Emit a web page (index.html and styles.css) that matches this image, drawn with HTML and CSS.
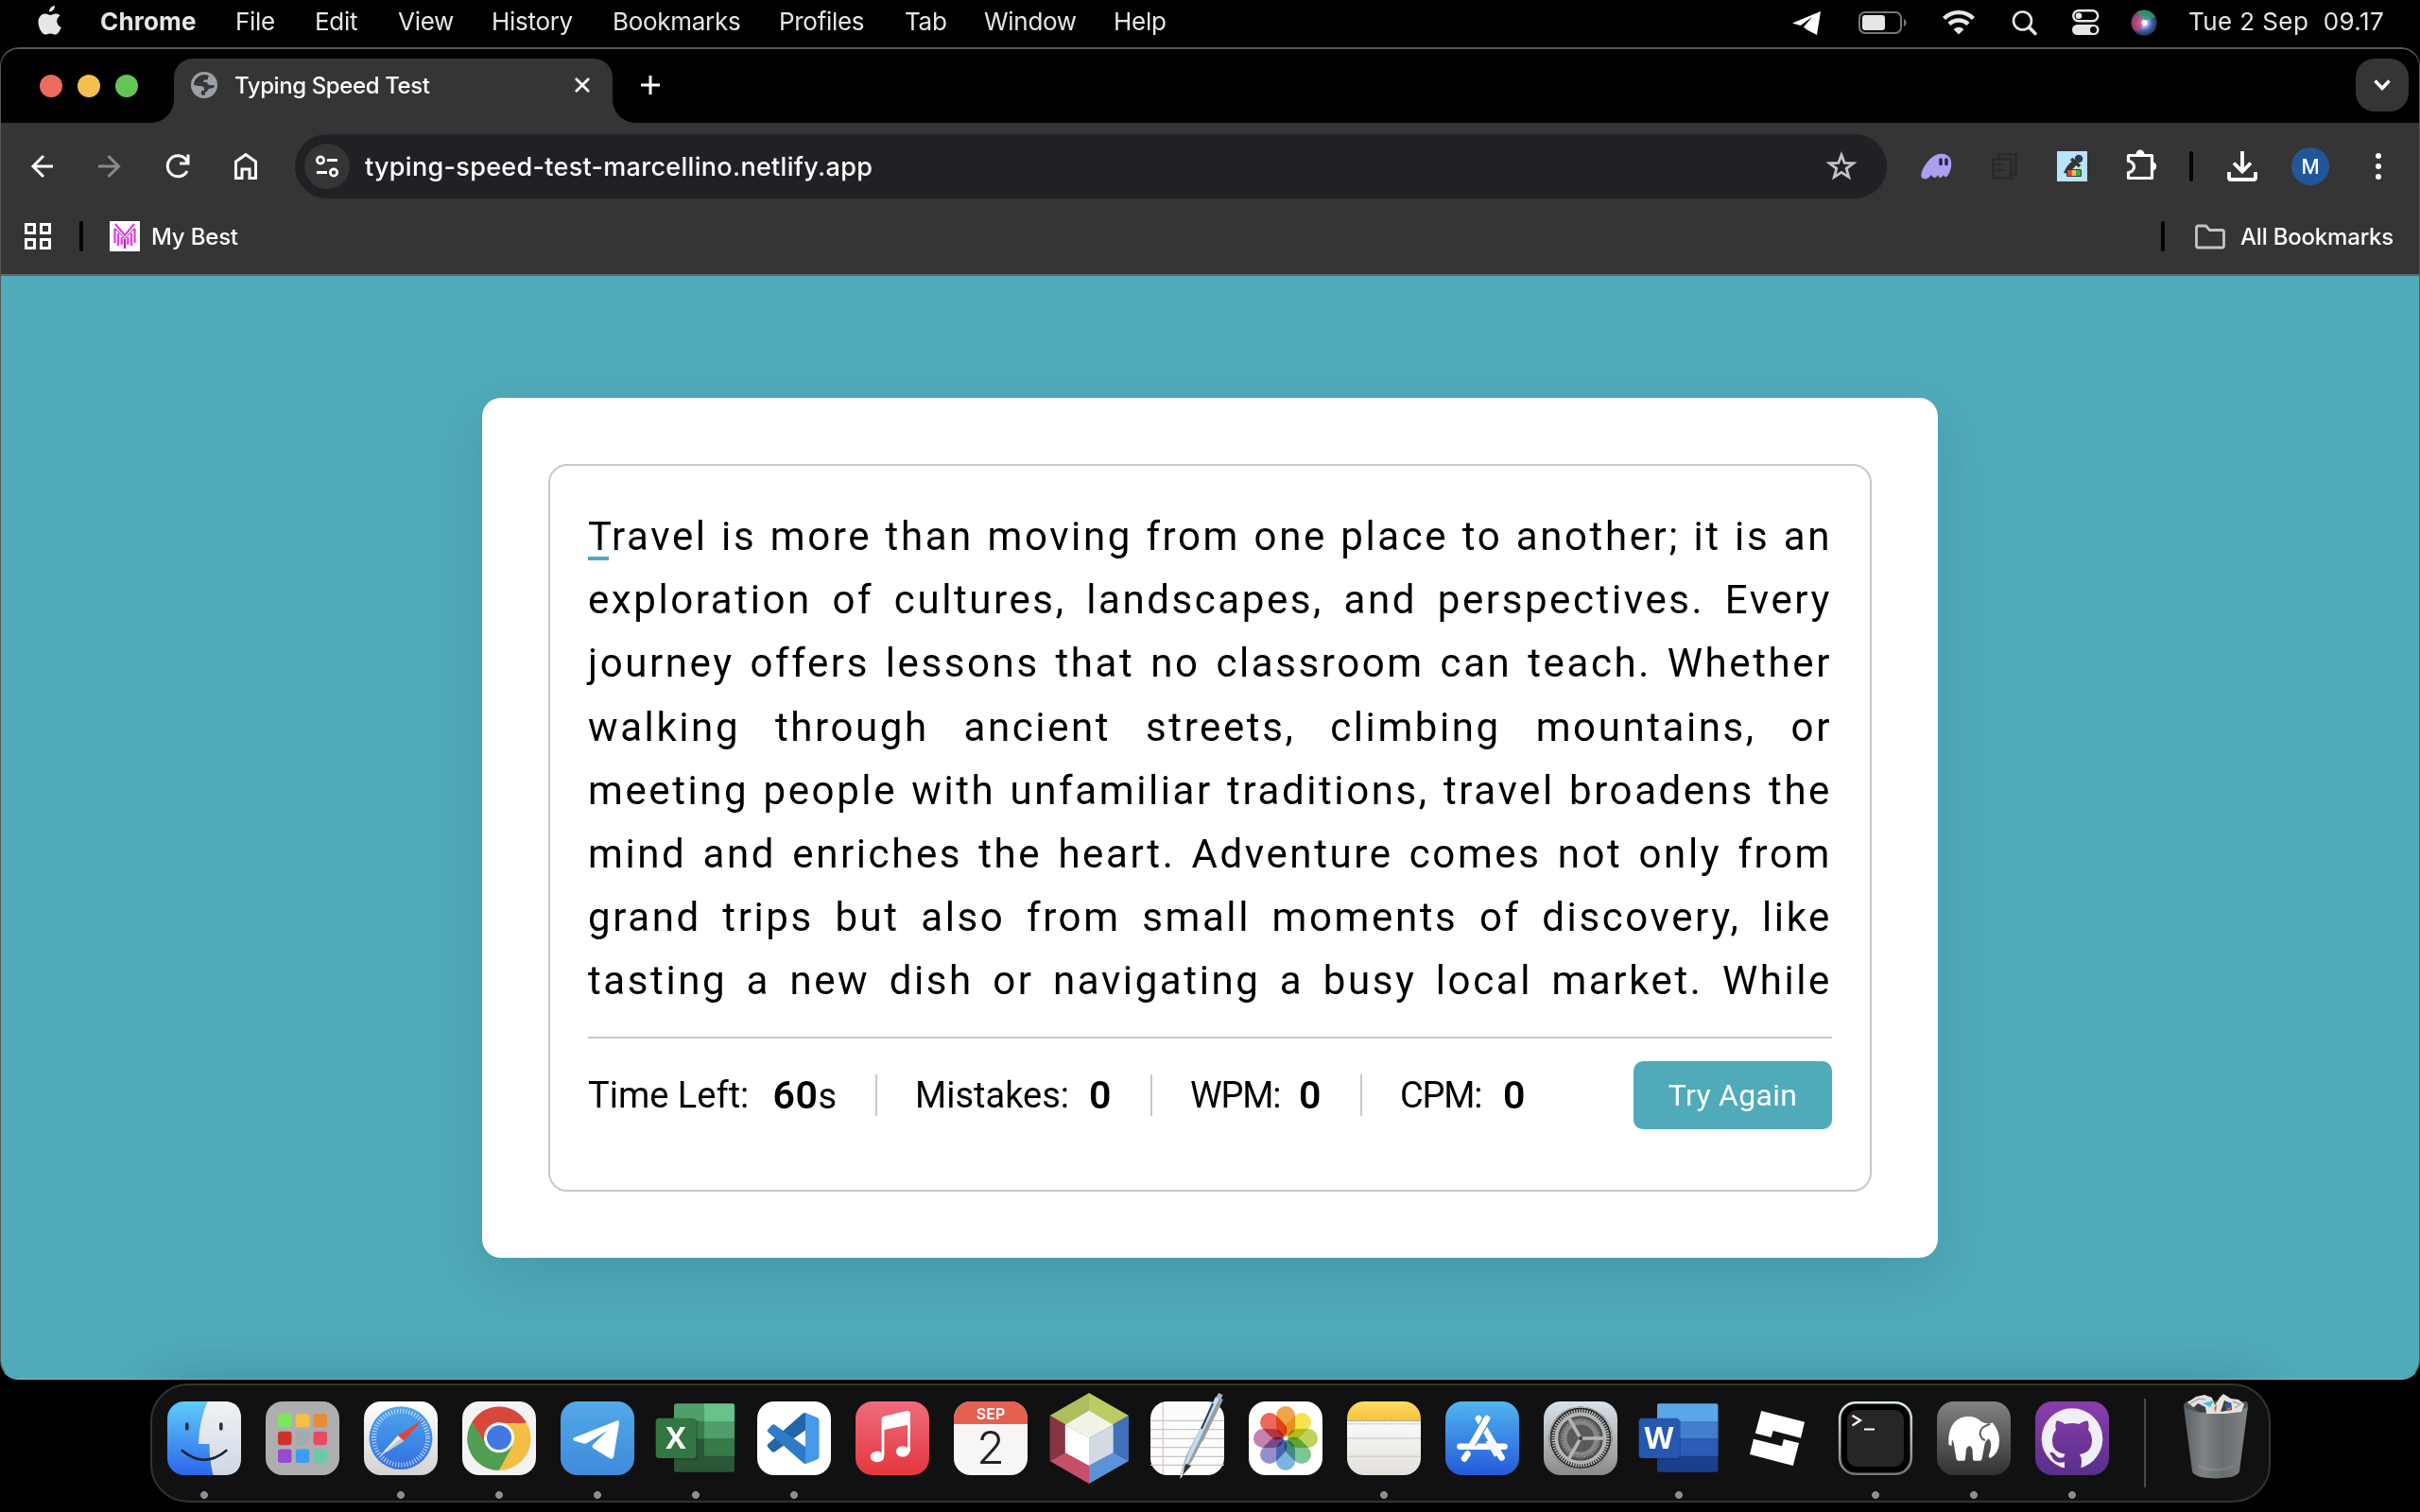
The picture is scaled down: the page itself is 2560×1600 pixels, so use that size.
FILE: index.html
```html
<!DOCTYPE html>
<html lang="en">
<head>
<meta charset="utf-8">
<title>Typing Speed Test</title>
<link rel="stylesheet" href="styles.css">
</head>
<body>
<header class="menubar">
  <svg class="apple" width="28" height="34" viewBox="0 0 28 34"><path d="M19 1c.3 3-2.600 6.600-6 6.600C12.600 4.500 15.800 1.200 19 1zM24.600 11.600c-2.400 1.500-3.500 3.500-3.400 6 .1 3 1.900 5.300 4.500 6.300-1 3-3.600 7.600-6.500 7.700-1.900 0-2.700-1.200-5-1.200s-3.200 1.200-5 1.200C5.500 31.600 1.500 24.600 1.500 18.500c0-5.600 3.600-9 7.500-9 2.200 0 3.900 1.400 5.300 1.400 1.300 0 3.300-1.500 5.900-1.500 1.700 0 3.400.8 4.400 2.200z" fill="#e6e6e6"/></svg>
  <nav class="menus">
    <b class="m-chrome">Chrome</b><span class="m-file">File</span><span class="m-edit">Edit</span><span class="m-view">View</span><span class="m-history">History</span><span class="m-bookmarks">Bookmarks</span><span class="m-profiles">Profiles</span><span class="m-tab">Tab</span><span class="m-window">Window</span><span class="m-help">Help</span>
  </nav>
  <div class="status">
    <svg width="662" height="50" viewBox="1886 0 662 50">
      <path d="M1896 24.500 1926 12l-4 25-10.500-5.500-3.500-3 9-10.500-12.500 9z" fill="#fff"/>
      <rect x="1967" y="13" width="44" height="22" rx="6" fill="none" stroke="#777" stroke-width="2"/><rect x="1970" y="16" width="24" height="16" rx="3" fill="#e6e6e6"/><path d="M2014 20c3.500 1.500 3.500 6.500 0 8z" fill="#777"/>
      <g fill="none" stroke="#e6e6e6" stroke-width="4.400"><path d="M2056.500 19.500a22 22 0 0 1 31 0"/><path d="M2062 25.500a14.500 14.500 0 0 1 20 0"/></g><path d="M2066.500 31q5.500-4.500 11 0L2072 36.500z" fill="#e6e6e6"/>
      <g fill="none" stroke="#e6e6e6"><circle cx="2139.500" cy="22" r="9.500" stroke-width="2.600"/><path d="m2146.500 29 6.500 6.500" stroke-width="3.600" stroke-linecap="round"/></g>
      <rect x="2193.200" y="11.200" width="26" height="11" rx="5.500" fill="none" stroke="#e6e6e6" stroke-width="2.400"/><circle cx="2199" cy="16.700" r="3.300" fill="#e6e6e6"/><rect x="2192" y="26" width="28.500" height="11" rx="5.500" fill="#e6e6e6"/><circle cx="2214.500" cy="31.500" r="3.500" fill="#000"/>
      <defs><radialGradient id="siri"><stop offset="0" stop-color="#fff"/><stop offset=".28" stop-color="#c9b4e4"/><stop offset=".62" stop-color="#3c66ad"/><stop offset="1" stop-color="#25314e"/></radialGradient></defs>
      <circle cx="2268" cy="24" r="13.800" fill="url(#siri)"/><path d="M2255 24a13 13 0 0 1 9-12q3 8 4 12l-6 10q-7-3-7-10z" fill="#d63f6e" opacity=".7"/><path d="M2260 13a14 14 0 0 1 20 5l-11 4z" fill="#2f9b6c" opacity=".8"/><circle cx="2268.500" cy="24" r="3" fill="#fff"/>
    </svg>
    <span class="clock">Tue 2 Sep&nbsp; 09.17</span>
  </div>
</header>

<main class="window">
  <div class="tabstrip">
    <div class="lights"><i class="red"></i><i class="yellow"></i><i class="green"></i></div>
    <div class="tab">
      <svg width="28" height="28" viewBox="0 0 28 28"><circle cx="14" cy="14" r="14" fill="#9aa0a6"/><path d="M13 3C7 4 3 9 3 14l5 1c3 0 6 0 6 3v2h-3v4c-1 0-2 0-2-1 1 1 4 2 6 1.500v-3c4-1 2-4 6-4 3 0 4-1 4-3.500-5 .5-7 0-7.500-2-.5-1.500-2-1-4-1V8.500h3.500c1 0 1-3 2-4.500C17 3 15 3 13 3z" fill="#353535"/></svg>
      <span class="tab-title">Typing Speed Test</span>
      <svg class="tab-close" width="18" height="18" viewBox="0 0 18 18"><path d="m2 2 14 14M16 2 2 16" stroke="#fff" stroke-width="2.800"/></svg>
    </div>
    <svg class="plus" width="20" height="20" viewBox="0 0 20 20"><path d="M10 0v20M0 10h20" stroke="#fff" stroke-width="3"/></svg>
    <button class="tab-search"><svg width="18" height="12" viewBox="0 0 18 12"><path d="m1.500 1.500 7.500 8 7.500-8" fill="none" stroke="#fff" stroke-width="3.400"/></svg></button>
  </div>
  <div class="toolbar">
    <svg width="312" height="80" viewBox="2 130 312 80"><g fill="none" stroke="#fff" stroke-width="3">
      <path d="M56 176H35M46 165l-11 11 11 11"/><path d="M104 176h21M114.500 165l11 11-11 11" stroke="#8a8a8a"/>
      <path d="M198 181a11 11 0 1 1-1.500-12.500l2 3.500M199 163.500v9.500h-9"/>
      <path d="M249.500 188.500v-17.500l10.500-7.500 10.500 7.500v17.500h-6.500v-9.500h-8v9.500z"/></g></svg>
    <div class="omnibox">
      <span class="site"><svg width="26" height="26" viewBox="0 0 26 26"><g fill="none" stroke="#fff" stroke-width="2.800"><circle cx="6" cy="6.500" r="3.600"/><path d="M13 6.500h11M2 19.500h11"/><circle cx="20" cy="19.500" r="3.600"/></g></svg></span>
      <span class="url">typing-speed-test-marcellino.netlify.app</span>
      <svg class="star" width="32" height="32" viewBox="0 0 32 32"><path d="m16 4 3.200 8.400 9.300.4-7.300 5.600 2.500 8.900L16 22.300l-7.700 5 2.500-8.900-7.300-5.600 9.300-.4z" fill="none" stroke="#c4c4c4" stroke-width="2.800"/></svg>
    </div>
    <svg width="560" height="80" viewBox="1996 130 560 80">
      <path d="M2033 188c-3-4 4-15 9-20 6-6 15-7 20-2 4 5 2 14-1 19-2 3-4 3-5 0-2 4-5 4-6 0-2 4-5 4-7 0-3 4-6 6-10 3z" fill="#ab9ff2"/><path d="M2053 169v4.500M2059 169v4.500" stroke="#29264a" stroke-width="3.600" stroke-linecap="round"/>
      <g fill="none" stroke="#292929" stroke-width="2.600"><path d="M2114 168v-4.500h18.500v21H2129"/><path d="M2108.500 168.500h19v20h-19zM2112 174h7M2112 180h9"/></g>
      <path d="M2176 160h32v32h-32z" fill="#b9e3fb"/><path d="M2183 183q3-8 10-13l4 4q-5 6-9 8-2 2-5 1z" fill="#333"/><path d="m2191 168 9 8" stroke="#333" stroke-width="3.500"/><circle cx="2199" cy="168" r="4.300" fill="#333b48"/><rect x="2186" y="179" width="16" height="8" rx="1.500" fill="#333"/><path d="M2187 180h4.500v6h-4.500z" fill="#e5413a"/><path d="M2191.500 180h5v6h-5z" fill="#f6c23c"/><path d="M2196.500 180h4.500v6h-4.500z" fill="#3fa556"/>
      <path d="M2251.500 164.500H2276.500V188.500H2251.500V182.500a6 6 0 0 0 0-12z" fill="none" stroke="#fff" stroke-width="3.200" stroke-linejoin="round"/><path d="M2259.500 163.500a4.500 5 0 0 1 9 0zM2277.500 171.500a4.600 4.600 0 0 1 0 9z" fill="#fff"/>
      <rect x="2316" y="160" width="4" height="32" rx="2"/>
      <path d="M2372 160v21M2363 172.500l9 9 9-9M2358 182v6q0 2 2 2h24q2 0 2-2v-6" fill="none" stroke="#fff" stroke-width="3.800"/>
      <circle cx="2444" cy="176" r="20" fill="#1f5799"/><text x="2444" y="184" class="avatar" text-anchor="middle">M</text>
      <g fill="#fff"><circle cx="2516" cy="165" r="3"/><circle cx="2516" cy="176" r="3"/><circle cx="2516" cy="187" r="3"/></g>
    </svg>
  </div>
  <div class="bookmarks">
    <svg width="28" height="28" viewBox="0 0 28 28"><path d="M1.500 1.500h9v9h-9zM17.500 1.500h9v9h-9zM1.500 17.500h9v9h-9zM17.500 17.500h9v9h-9z" fill="none" stroke="#fff" stroke-width="3"/></svg>
    <i class="sep s1"></i>
    <svg class="fav" width="32" height="32" viewBox="0 0 32 32"><path d="M0 0h32v32H0z" fill="#fff"/><path d="M5.500 8v15M9 13v13M12.700 17v8M19.300 17v8M23 13v13M26.500 8v15" stroke="#e83ae8" stroke-width="2.300"/><path d="m6 3 10 12L26 3" fill="none" stroke="#e83ae8" stroke-width="2.400"/><path d="m5.500 7.500 10.500 11 10.500-11" fill="none" stroke="#5a2a5c" stroke-width="1"/><path d="M16 19v10" stroke="#a52ea8" stroke-width="2.400"/></svg>
    <span class="mybest">My Best</span>
    <i class="sep s2"></i>
    <svg width="34" height="28" viewBox="0 0 34 28"><path d="M2.500 24V5q0-2 2-2h8l4 4.500h13q2 0 2 2V24q0 2-2 2h-25q-2 0-2-2z" fill="none" stroke="#c4c4c4" stroke-width="2.800"/></svg>
    <span class="allbm">All Bookmarks</span>
  </div>
  <section class="page">
    <div class="card"><div class="panel">
      <div class="quote">
        <p><span class="cur">T</span>ravel is more than moving from one place to another; it is an</p>
        <p>exploration of cultures, landscapes, and perspectives. Every</p>
        <p>journey offers lessons that no classroom can teach. Whether</p>
        <p>walking through ancient streets, climbing mountains, or</p>
        <p>meeting people with unfamiliar traditions, travel broadens the</p>
        <p>mind and enriches the heart. Adventure comes not only from</p>
        <p>grand trips but also from small moments of discovery, like</p>
        <p>tasting a new dish or navigating a busy local market. While</p>
      </div>
      <div class="results">
        <div class="stat st1"><span class="label">Time Left:</span><span><b>60</b>s</span></div>
        <div class="stat st2"><span class="label">Mistakes:</span><b>0</b></div>
        <div class="stat st3"><span class="label caps">WPM:</span><b>0</b></div>
        <div class="stat st4"><span class="label caps">CPM:</span><b>0</b></div>
        <button class="again">Try Again</button>
      </div>
    </div></div>
  </section>
</main>

<footer class="dock">
  <svg class="app run" viewBox="0 0 104 122"><defs>
    <linearGradient id="fa" x2="0" y2="1"><stop stop-color="#5fcbfa"/><stop offset="1" stop-color="#2d66ea"/></linearGradient>
    <linearGradient id="fb" x2="0" y2="1"><stop stop-color="#f1f1f3"/><stop offset="1" stop-color="#cfd8e6"/></linearGradient>
    <clipPath id="sq"><rect x="13" y="17" width="78" height="78" rx="18"/></clipPath></defs>
    <rect x="13" y="17" width="78" height="78" rx="18" fill="url(#fa)"/><path d="M55.600 17Q46.500 38 46 62H57.500Q57.500 80 61.500 95H73Q91 95 91 77V35Q91 17 73 17z" fill="url(#fb)"/><path d="M33.800 41v5M69.800 41v5" stroke="#26313b" stroke-width="3.600" stroke-linecap="round"/><path d="M28.700 69q23.300 19.500 46.700 0" fill="none" stroke="#1d2430" stroke-width="2.600" stroke-linecap="round"/></svg>
  <svg class="app" viewBox="0 0 104 122"><rect x="13" y="17" width="78" height="78" rx="18" fill="#aeaeb0"/><rect x="26" y="30" width="14.500" height="14.500" rx="3" fill="#7be85c"/><rect x="44.800" y="30" width="14.500" height="14.500" rx="3" fill="#f4bf43"/><rect x="63.500" y="30" width="14.500" height="14.500" rx="3" fill="#e88c36"/><rect x="26" y="48.800" width="14.500" height="14.500" rx="3" fill="#cc3227"/><rect x="44.800" y="48.800" width="14.500" height="14.500" rx="3" fill="#a3abb0"/><rect x="63.500" y="48.800" width="14.500" height="14.500" rx="3" fill="#e94a61"/><rect x="26" y="67.500" width="14.500" height="14.500" rx="3" fill="#964bcf"/><rect x="44.800" y="67.500" width="14.500" height="14.500" rx="3" fill="#3c9cf2"/><rect x="63.500" y="67.500" width="14.500" height="14.500" rx="3" fill="#6acba6"/></svg>
  <svg class="app run" viewBox="0 0 104 122"><defs><linearGradient id="sw" x2="0" y2="1"><stop stop-color="#fff"/><stop offset="1" stop-color="#d3d3d3"/></linearGradient><linearGradient id="sb" x2="0" y2="1"><stop stop-color="#4da5ed"/><stop offset="1" stop-color="#346fe0"/></linearGradient></defs><rect x="13" y="17" width="78" height="78" rx="18" fill="url(#sw)"/><circle cx="52" cy="55.700" r="33.400" fill="url(#sb)"/><circle cx="52" cy="55.700" r="28.500" fill="none" stroke="#e4f0fc" stroke-width="5" stroke-dasharray="1 2.100" opacity=".85"/><path d="m75.500 36-26.500 17 6 6z" fill="#e0453b"/><path d="m29.500 75 19.500-22 6 6z" fill="#f0f0f0"/><path d="m29.500 75 22.500-19 3 3z" fill="#c4c8cf"/></svg>
  <svg class="app run" viewBox="0 0 104 122"><rect x="13" y="17" width="78" height="78" rx="18" fill="#f3f3f3"/><circle cx="52" cy="56.500" r="33.300" fill="#f3bf42"/><path d="M52 56 38.500 64 23.200 39A33.300 33.300 0 0 1 80.800 39z" fill="#d8483a"/><path d="M52 40h28.800Q85.500 48 85.300 56.500A33.300 33.300 0 0 1 52 89.800L66 64z" fill="#f3bf42"/><path d="M23.200 39A33.300 33.300 0 0 0 52 89.800L66 64q-14 10-27-.5z" fill="#4f9e52"/><circle cx="52" cy="55.300" r="16" fill="#fff"/><circle cx="52" cy="55.300" r="13" fill="#4178e4"/></svg>
  <svg class="app run" viewBox="0 0 104 122"><defs><linearGradient id="tg" x2="0" y2="1"><stop stop-color="#53a8e9"/><stop offset="1" stop-color="#408bdb"/></linearGradient></defs><rect x="13" y="17" width="78" height="78" rx="18" fill="url(#tg)"/><path d="M27 55.500 72.500 37.500q2.800-.7 2.500 2.500l-6 36q-1 2.500-4 1.300L47.500 66.500q-1.700-2 0-4L63 47.500 41 61q-2 1-4.500.3L27 58.500q-1.500-1.500 0-3z" fill="#fff"/></svg>
  <svg class="app run" viewBox="0 0 104 122"><rect x="29" y="19.300" width="64" height="72.500" rx="2.500" fill="#2c5638"/><path d="M31 19.300h30V38H29V21z" fill="#4f9f6b"/><path d="M61 19.300h30q2 0 2 2V38H61z" fill="#66c48a"/><path d="M29 38h32v18.300H29z" fill="#377b4a"/><path d="M61 38h32v18.300H61z" fill="#509f6a"/><path d="M61 56.300h32v18.400H61z" fill="#377b48"/><path d="M29 37h25v42H29z" fill="#173a22" opacity=".35"/><rect x="9.700" y="34.700" width="42.600" height="42.300" rx="3.500" fill="#327741"/><text x="31" y="67.300" class="office" text-anchor="middle">X</text></svg>
  <svg class="app run" viewBox="0 0 104 122"><rect x="13" y="17" width="78" height="78" rx="18" fill="#fff"/><path d="m24.500 62 36.500-32q2-1.500 3-1v18.500L32 70q-2 1.500-3.500 0l-4.500-5q-1-1.500.5-3z" fill="#2465a8"/><path d="m24.500 49.500 36.500 32q2 1.500 3 1.500V65L32 42q-2-1.500-3.500 0L24 47q-1 1.500.5 2.500z" fill="#2f7bc8"/><path d="m64 29 12.500 5q2 1 2 3v38.500q0 2-2 3L64 83.300z" fill="#4799ea"/></svg>
  <svg class="app" viewBox="0 0 104 122"><defs><linearGradient id="mu" x2="0" y2="1"><stop stop-color="#ee6b7e"/><stop offset="1" stop-color="#e4373d"/></linearGradient></defs><rect x="13" y="17" width="78" height="78" rx="18" fill="url(#mu)"/><path d="M42 74.500V36q0-1.500 1.500-2l24-5.500q2-.3 2 1.500v40" fill="none" stroke="#fff" stroke-width="2.800"/><path d="m41 35 29-6v12.500l-29 6z" fill="#fff"/><ellipse cx="36" cy="75.500" rx="7.200" ry="5.800" fill="#fff"/><ellipse cx="63" cy="70" rx="7.200" ry="5.800" fill="#fff"/></svg>
  <svg class="app" viewBox="0 0 104 122"><g clip-path="url(#sq)"><path d="M13 17h78v78H13z" fill="#f7f6f5"/><path d="M13 17h78v24H13z" fill="#e4604f"/></g><text x="52" y="36" class="cal-m" text-anchor="middle">SEP</text><text x="52" y="83" class="cal-d" text-anchor="middle">2</text></svg>
  <svg class="app" viewBox="0 0 104 122"><path d="M52 8v48L10.500 32z" fill="#aebd5e"/><path d="M52 8v48l42-24z" fill="#bccc65"/><path d="M10.500 32 52 56 27 71 10.500 80z" fill="#873445"/><path d="M94 32 52 56l26 15 16 9z" fill="#4271b9"/><path d="M10.500 80 27 71l25 14v19z" fill="#c74f68"/><path d="m94 80-16-9-26 14v19z" fill="#5b93db"/><path d="M52 26.700 77.700 41.700 52 55.500 26.800 41.700z" fill="#f1f3e4"/><path d="M26.800 41.700 52 55.500V85L26.800 71.300z" fill="#fff"/><path d="M77.700 41.700 52 55.500V85l25.700-13.700z" fill="#d3dae3"/></svg>
  <svg class="app" viewBox="0 0 104 122"><rect x="13" y="17" width="78" height="78" rx="18" fill="#fcfcfc"/><path d="M13 37.300h78M13 46.700h78M13 56.300h78M13 65.700h78M13 75.300h78M13 84.300h78" stroke="#c6c6c6" stroke-width="1.300"/><path d="M26.300 18v76" stroke="#efb9b5" stroke-width="1.200"/><path d="m83 12 7 3-33 65-8 11-5 8 3-13 4-12z" fill="#8d9dab"/><path d="m82 12 4 1.500L53 82l-6 6 6-16z" fill="#c6dcec"/><path d="m79 19-12 27" stroke="#344253" stroke-width="2"/><path d="m85 8 4.500 2-2 5-5-2z" fill="#9fb5c8"/><path d="m88 17-20 42" stroke="#b99f7d" stroke-width="1.300"/><path d="m50 83 6 2-8 9-4 5z" fill="#34343a"/><path d="m50 81-3 8-3 10 3-3z" fill="#dfe4e8"/></svg>
  <svg class="app" viewBox="0 0 104 122"><rect x="13" y="17" width="78" height="78" rx="18" fill="#fff"/><g class="petals"><rect x="42" y="22" width="20" height="32" rx="10" fill="#f09b38"/><rect x="42" y="22" width="20" height="32" rx="10" fill="#f3e13e" transform="rotate(45 52 56)"/><rect x="42" y="22" width="20" height="32" rx="10" fill="#b6d04e" transform="rotate(90 52 56)"/><rect x="42" y="22" width="20" height="32" rx="10" fill="#71c189" transform="rotate(135 52 56)"/><rect x="42" y="22" width="20" height="32" rx="10" fill="#6faee0" transform="rotate(180 52 56)"/><rect x="42" y="22" width="20" height="32" rx="10" fill="#8d84c4" transform="rotate(225 52 56)"/><rect x="42" y="22" width="20" height="32" rx="10" fill="#c077a8" transform="rotate(270 52 56)"/><rect x="42" y="22" width="20" height="32" rx="10" fill="#ea5b4c" transform="rotate(315 52 56)"/></g></svg>
  <svg class="app run" viewBox="0 0 104 122"><defs><linearGradient id="no" x2="0" y2="1"><stop stop-color="#fbda6a"/><stop offset="1" stop-color="#f6c435"/></linearGradient><linearGradient id="np" x2="0" y2="1"><stop stop-color="#fafafa"/><stop offset="1" stop-color="#e4e1db"/></linearGradient></defs><g clip-path="url(#sq)"><path d="M13 37h78v58H13z" fill="url(#np)"/><path d="M13 17h78v20.300H13z" fill="url(#no)"/><path d="M13 37.600h78" stroke="#a9a59b"/><path d="M14 40.800h78" stroke="#bbb" stroke-width="1.600" stroke-dasharray="1.600 1.600"/><path d="M13 56h78M13 75.300h78" stroke="#d3d2d4" stroke-width="1.500"/></g></svg>
  <svg class="app" viewBox="0 0 104 122"><defs><linearGradient id="as" x2="0" y2="1"><stop stop-color="#51b5ef"/><stop offset="1" stop-color="#2559da"/></linearGradient></defs><rect x="13" y="17" width="78" height="78" rx="18" fill="url(#as)"/><g stroke="#fff" stroke-width="6.600" stroke-linecap="round"><path d="m48 35 24.500 41.500M28.500 64.700h47"/><path d="M57 35 41.500 62" stroke="#3d87e4" stroke-width="9" stroke-linecap="butt"/><path d="M57 35 41.500 62M36.500 72.500 33 77.500"/></g><path d="m58.500 58 9.500 16" stroke="#f3f6fc" stroke-width="6.600"/></svg>
  <svg class="app" viewBox="0 0 104 122"><defs><linearGradient id="se" x2="0" y2="1"><stop stop-color="#d9e2ea"/><stop offset="1" stop-color="#8d8b88"/></linearGradient></defs><rect x="13" y="17" width="78" height="78" rx="18" fill="url(#se)"/><circle cx="52" cy="56" r="33.500" fill="#242424"/><circle cx="52" cy="56" r="23" fill="#5a5a58"/><circle cx="52" cy="56" r="28.500" fill="none" stroke="#b9bcbe" stroke-width="4.500" stroke-dasharray="1.500 1.200"/><g fill="none" stroke="#b3b5b6"><circle cx="52" cy="56" r="32.800" stroke-width="1.200"/><circle cx="52" cy="56" r="25.500" stroke-width="3.800"/><circle cx="52" cy="56" r="16.500" stroke="#85878a" stroke-width="4"/><circle cx="52" cy="56" r="19.500" stroke="#999" stroke-width="2" stroke-dasharray="1.500 1.300"/><path d="M52 56h24M52 56 40 35M52 56 40 77" stroke-width="3.600"/></g><circle cx="52" cy="56" r="2.200" fill="#444"/></svg>
  <svg class="app run" viewBox="0 0 104 122"><rect x="29" y="19.300" width="64.400" height="72.500" rx="2.500" fill="#1c3f8c"/><path d="M29 38V21.500q0-2.200 2-2.200h60.400q2 0 2 2V38z" fill="#5ba5e9"/><path d="M29 38h64.400v18.300H29z" fill="#427ecd"/><path d="M29 56.300h64.400v18.400H29z" fill="#2c5bb9"/><path d="M29 37h25v42H29z" fill="#102a6a" opacity=".3"/><rect x="9.700" y="34.700" width="43" height="42.300" rx="3.500" fill="#2758b0"/><text x="31" y="67.300" class="office" text-anchor="middle">W</text></svg>
  <svg class="app" viewBox="0 0 104 122"><rect x="13" y="17" width="78" height="78" rx="18" fill="#111214"/><path d="m35.200 27 45.800 11.700-4 17L47.700 48l-2.100 7-16.800-4.300zM27 56.700l30 7.600 1.800-7.300L75 61l-6.200 24L23 73z" fill="#fff"/></svg>
  <svg class="app run" viewBox="0 0 104 122"><defs><linearGradient id="te" x2="0" y2="1"><stop stop-color="#d9e9f3"/><stop offset="1" stop-color="#777"/></linearGradient></defs><rect x="14.200" y="18.200" width="75.600" height="75.600" rx="17" fill="#000" stroke="url(#te)" stroke-width="2.600"/><rect x="22" y="26" width="60" height="60" rx="10" fill="#262626"/><path d="m27.500 32 8.500 5-8.500 5.500M40 46.500h11" fill="none" stroke="#fff" stroke-width="2.200"/></svg>
  <svg class="app run" viewBox="0 0 104 122"><defs><linearGradient id="ma" x2="0" y2="1"><stop stop-color="#838383"/><stop offset="1" stop-color="#313131"/></linearGradient></defs><rect x="13" y="17" width="78" height="78" rx="18" fill="url(#ma)"/><path d="M25.500 63C24 44 33 33 45.500 33c7 0 11 2 14.500 5.500q8 3.500 11.500.8 7.500 8 7.500 19.200 0 13-9.500 18.500-2.500-.5-1.500-3.500 4.500-12 0-17-3.500 1-4.500 6l-3 15.500q-.5 1.700-2 1.700h-6q-1.500 0-1.500-2l-.5-10.500q-3-6.500-6.500 0l-1 10.500q0 2-2 2h-5.500q-1.500 0-2-2L30.500 60l-1.500-3-.5 7z" fill="#fff"/><path d="M69 41Q58.500 44 58.500 51q1 6 5.500 7" fill="none" stroke="#5c5c5c" stroke-width="2"/></svg>
  <svg class="app run" viewBox="0 0 104 122"><defs><linearGradient id="gh" gradientUnits="userSpaceOnUse" x1="0" y1="17" x2="0" y2="95"><stop stop-color="#8c3dae"/><stop offset="1" stop-color="#572f8a"/></linearGradient></defs><rect x="13" y="17" width="78" height="78" rx="18" fill="url(#gh)"/><circle cx="52" cy="56.500" r="32.300" fill="#f0eff5"/><path d="M35.500 37.500q5 0 9 3.500 7.500-2 15 0 4-3.500 9-3.500 2 5 .5 9.500 4 5 4 11 0 13-13 15 2 3 2 8l-1 10H44V81q-10 3-13.500-6-2-2.500-2-4 3.500-1 6.500 3.500 3 3.500 8 1.500l1.500-3.500Q31 71 31 58q0-6 4-11-1.500-4.500.5-9.500z" fill="url(#gh)"/></svg>
  <i class="dock-sep"></i>
  <svg class="app" viewBox="0 0 104 122"><defs><linearGradient id="tr"><stop stop-color="#5b6064"/><stop offset=".3" stop-color="#7e8386"/><stop offset=".6" stop-color="#686d70"/><stop offset="1" stop-color="#7f8487"/></linearGradient></defs><path d="M18 22q32 14 68 0L77 91q-2 7-25 7.500Q29 98 27 91z" fill="url(#tr)"/><path d="M18 22q0-4 6-6l60 1q3 2 2 5-10 8-34 8T18 22z" fill="#4f5458"/><path d="m22 18 9-6 9-2 8 3 3 8 5-8 4-4 8 5 8 1 6 5-3 8-9 1-8 1H43l-11-4z" fill="#e2e2e2"/><path d="m28 24 5-5 8 4 1 6-7-1zM57 28l4-12 7 3 1 7z" fill="#3e3c3f"/><path d="m38 19 12-3-4 7z" fill="#45c1dc"/><path d="m62 19 6-1 1 6-6 3z" fill="#325ca1"/><path d="m50 24 3-4-1 9zM63 25l6-2-3 4z" fill="#d36b36"/><path d="m24 20 10-6 7 1M70 17l8 3-6 4" fill="none" stroke="#aaa" stroke-width="1.500"/><path d="M33 85q18 9 38 0" fill="none" stroke="#a5aaad" stroke-width="3" opacity=".25"/></svg>
</footer>
</body>
</html>
```
FILE: styles.css
```css
* { box-sizing: border-box; }
body { margin: 0; width: 2560px; height: 1600px; overflow: hidden; background: #000; font-family: Inter, "Liberation Sans", sans-serif; display: flex; flex-direction: column; }
svg { display: block; flex: none; }
button { border: 0; padding: 0; font: inherit; }

.menubar { height: 50px; flex: none; display: flex; align-items: flex-start; color: #e6e6e6; font-size: 26px; line-height: 46px; white-space: nowrap; }
.apple { margin: 5px 0 0 39px; }
.menus { display: flex; margin-left: 39px; }
.menus > * { letter-spacing: -.3px; }
.menus > .m-chrome { width: 143px; font-weight: 700; letter-spacing: .2px; }
.m-file { width: 84px; }
.m-edit { width: 88px; }
.m-view { width: 99px; }
.m-history { width: 128px; }
.m-bookmarks { width: 176px; }
.m-profiles { width: 133px; }
.m-tab { width: 84px; }
.m-window { width: 137px; }
.status { margin-left: auto; display: flex; margin-right: 12px; }
.status svg { margin-right: -233px; }
.clock { width: 233px; letter-spacing: .4px; }

.window { height: 1410px; flex: none; border: 2px solid #565656; border-left-width: 1px; border-right-width: 1px; border-bottom-color: #62b3c1; border-radius: 20px; overflow: hidden; background: #353535; display: flex; flex-direction: column; color: #fff; }
.tabstrip { height: 78px; flex: none; background: #000; display: flex; align-items: flex-start; position: relative; }
.lights { display: flex; gap: 16px; padding: 27px 0 0 41px; width: 183px; }
.lights i { width: 24px; height: 24px; border-radius: 50%; }
.red { background: #ed6a5e; }
.yellow { background: #f5bf4f; }
.green { background: #62c554; }
.tab { position: relative; width: 464px; height: 68px; margin-top: 10px; padding: 0 23px 12px 18px; border-radius: 20px 20px 0 0; background: #353535; display: flex; align-items: center; }
.tab::before, .tab::after { content: ""; position: absolute; bottom: 0; width: 24px; height: 24px; }
.tab::before { left: -24px; background: radial-gradient(circle at 0 0, #000 23.500px, #353535 24px); }
.tab::after { right: -24px; background: radial-gradient(circle at 100% 0, #000 23.500px, #353535 24px); }
.tab-title { margin-left: 18px; font-size: 24px; letter-spacing: -.4px; font-weight: 500; }
.tab-close { margin-left: auto; }
.plus { margin: 28px 0 0 30px; }
.tab-search { width: 56px; height: 56px; margin: 10px 11px 0 auto; border-radius: 20px; background: #353535; display: grid; place-items: center; }
.toolbar { height: 80px; flex: none; display: flex; padding-left: 1px; background: #353535; }
.omnibox { width: 1684px; height: 68px; margin: 12px 0 0 -2px; border-radius: 34px; background: #202125; display: flex; align-items: center; padding: 0 32px 0 10px; }
.site { width: 48px; height: 48px; border-radius: 50%; background: #353535; display: grid; place-items: center; }
.url { margin-left: 16px; font-size: 27px; font-weight: 500; letter-spacing: .3px; white-space: nowrap; }
.star { margin-left: auto; }
.avatar { font: 500 21px Inter, sans-serif; fill: #fff; }
.bookmarks { height: 82px; flex: none; display: flex; align-items: center; padding: 0 29px 0 25px; border-bottom: 2px solid #656565; font-size: 24px; font-weight: 500; letter-spacing: -.2px; }
.sep { width: 4px; height: 32px; border-radius: 2px; background: #000; }
.s1 { margin-left: 30px; }
.fav { margin-left: 28px; }
.mybest { margin-left: 12px; }
.s2 { margin-left: auto; margin-right: 31px; }
.allbm { margin-left: 15px; width: 160px; white-space: nowrap; }

.page { flex: 1; background: #4faaba; display: flex; justify-content: center; align-items: flex-start; padding-top: 129px; color: #000; font-family: Roboto, sans-serif; }
.card { width: 1540px; height: 910px; padding: 70px; border-radius: 20px; background: #fff; box-shadow: 0 20px 60px rgba(0, 0, 0, .1); }
.panel { height: 770px; border: 2px solid #c8c8c8; border-radius: 20px; padding: 41px 40px 0; }
.quote { height: 563px; font-size: 42px; line-height: 67.200px; letter-spacing: 2.600px; }
.quote p { margin: 0; text-align: justify; text-align-last: justify; white-space: nowrap; }
.cur { background: linear-gradient(#4faaba, #4faaba) left bottom / 22px 4px no-repeat; padding-bottom: 1px; letter-spacing: 0; }
.results { border-top: 2px solid #c8c8c8; padding-top: 24px; display: flex; align-items: center; font-size: 38px; line-height: 44px; white-space: nowrap; }
.stat { display: flex; justify-content: space-between; height: 44px; }
.stat b { font-weight: 600; font-size: 41px; letter-spacing: .5px; }
.stat + .stat { border-left: 2px solid #c8c8c8; padding-left: 40px; margin-left: 41px; }
.caps { letter-spacing: -1.200px; }
.st1 { width: 263px; }
.st2 { width: 250px; }
.st3 { width: 181px; }
.st4 { width: 175px; }
.again { margin-left: auto; width: 210px; height: 72px; border-radius: 10px; background: #4faaba; color: #fff; font-size: 32px; letter-spacing: .3px; }

.dock { position: relative; width: 2243px; height: 126px; flex: none; margin: 4px 0 0 159px; border: 2px solid #333; border-radius: 40px; background: #111; padding-left: 3px; display: flex; box-shadow: 0 0 60px rgba(0, 0, 0, .18); }
.app { width: 104px; height: 122px; }
.run { background: radial-gradient(circle at 52px 116px, #8e8e8e 3.600px, transparent 4.300px); }
.dock-sep { width: 2px; height: 94px; margin: 14px 22px 0 24px; background: #4a4a4a; }
.office { font: 700 32px "Open Sans", sans-serif; fill: #fff; }
.cal-m { font: 600 16px Inter, sans-serif; fill: #fff; }
.cal-d { font: 300 48px Inter, sans-serif; fill: #222; }
.petals rect { mix-blend-mode: multiply; opacity: .92; }
```
